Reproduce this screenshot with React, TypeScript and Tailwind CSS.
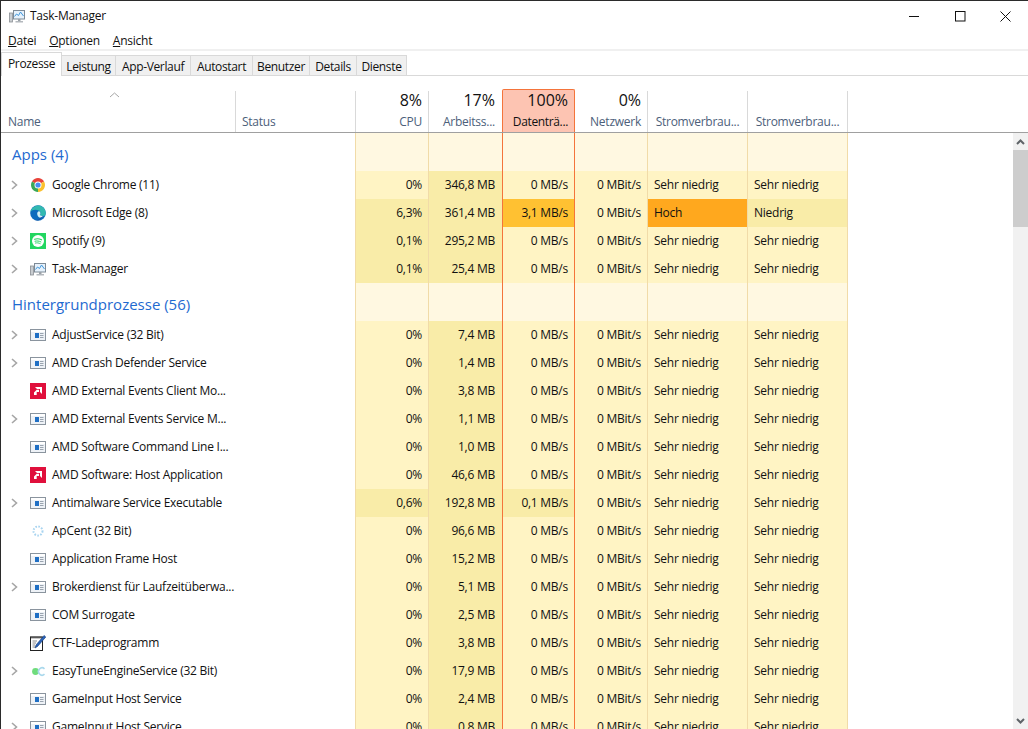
import React from "react";

const TINT = "bg-[#f9eca8]";
const BASE = "bg-[#fff4c4]";

function TaskIcon() {
  return (
    <svg width="16" height="16" viewBox="0 0 16 16" className="shrink-0">
      <rect x="0.5" y="5" width="3" height="9" fill="#c9cdd1" stroke="#8a8f94" strokeWidth="0.8" />
      <rect x="4.5" y="2.5" width="11" height="8.5" fill="#e6f1fb" stroke="#7d8a96" />
      <path d="M5.5 8.5 L7.5 6 L9.5 7.5 L11.5 4 L14.5 8" fill="none" stroke="#3f97dc" strokeWidth="1" />
      <rect x="9" y="11" width="2.5" height="2" fill="#9aa1a8" />
      <rect x="6.5" y="13" width="7.5" height="1.5" fill="#b3b8bd" />
    </svg>
  );
}

function ChromeIcon() {
  return (
    <svg width="16" height="16" viewBox="0 0 16 16" className="shrink-0">
      <path d="M8 8 L1.94 4.5 A7 7 0 0 1 14.06 4.5 Z" fill="#e8433a" />
      <path d="M8 8 L14.06 4.5 A7 7 0 0 1 8 15 Z" fill="#fbc02d" />
      <path d="M8 8 L8 15 A7 7 0 0 1 1.94 4.5 Z" fill="#3aa757" />
      <circle cx="8" cy="8" r="3.5" fill="#ffffff" />
      <circle cx="8" cy="8" r="2.6" fill="#4a8cf0" />
    </svg>
  );
}

function EdgeIcon() {
  return (
    <svg width="16" height="16" viewBox="0 0 16 16" className="shrink-0">
      <circle cx="8" cy="8" r="7.8" fill="#0f6cbd" />
      <path d="M0.4 7 C1.6 1.8 7 -0.6 11 1 C14 2.2 15.8 5 15.8 8.4 C15.8 10 14.5 11 12.8 11 C11 11 9.8 10.4 9.8 9.6 C11 8.6 10.8 6.8 9.2 5.8 C6.2 4 2 4.4 0.4 7 Z" fill="#33b9b0" />
      <path d="M7.2 8.2 C7.6 6.8 8.6 6.2 9.6 6.4 C10.6 7.2 10.8 8.8 9.8 9.6 C9.9 10.6 11 11.1 12.8 11 C12.2 12 11.2 12.6 10.2 12.8 C8.4 12.4 7 10.4 7.2 8.2 Z" fill="#d4f1f4" />
      <path d="M13 10.9 C11.8 13.8 8.8 15.9 5.4 15.4 C8 15.2 9.6 14 10.2 12.8 C11.2 12.4 12.2 11.8 13 10.9 Z" fill="#1b4e9e" />
    </svg>
  );
}

function SpotifyIcon() {
  return (
    <svg width="16" height="16" viewBox="0 0 16 16" className="shrink-0">
      <rect width="16" height="16" fill="#22d660" />
      <circle cx="8" cy="8" r="6" fill="#ffffff" />
      <path d="M4.6 6.2 C6.8 5.5 9.4 5.7 11.5 6.8" fill="none" stroke="#22d660" strokeWidth="1.2" strokeLinecap="round" />
      <path d="M5 8.2 C6.9 7.7 9 7.9 10.9 8.9" fill="none" stroke="#22d660" strokeWidth="1" strokeLinecap="round" />
      <path d="M5.4 10 C7 9.6 8.7 9.8 10.2 10.6" fill="none" stroke="#22d660" strokeWidth="0.9" strokeLinecap="round" />
    </svg>
  );
}

function ServiceIcon() {
  return (
    <svg width="16" height="16" viewBox="0 0 16 16" className="shrink-0">
      <rect x="0.5" y="2.5" width="15" height="11" fill="#eef2f7" stroke="#8a949e" />
      <rect x="1" y="3" width="14" height="2" fill="#ffffff" />
      <rect x="5" y="6" width="4" height="5" fill="#1f6fc4" />
      <path d="M10 6.5 H13.5 M10 8.5 H13.5 M10 10.5 H13.5" stroke="#9aa4af" strokeWidth="1" />
    </svg>
  );
}

function AmdIcon() {
  return (
    <svg width="16" height="16" viewBox="0 0 16 16" className="shrink-0">
      <rect width="16" height="16" fill="#e0103c" />
      <path d="M5 4 H12 V11 L10 9 V6 H7 Z" fill="#ffffff" />
      <path d="M4 9.5 L6.7 6.8 H9 V9 H6.7 V12 H4 Z" fill="#ffffff" />
    </svg>
  );
}

function ApCentIcon() {
  return (
    <svg width="16" height="16" viewBox="0 0 16 16" className="shrink-0">
      <circle cx="8" cy="8" r="4.5" fill="none" stroke="#a8d4f0" strokeWidth="2" strokeDasharray="1.6 1.4" />
    </svg>
  );
}

function CtfIcon() {
  return (
    <svg width="16" height="16" viewBox="0 0 16 16" className="shrink-0">
      <rect x="0.5" y="2" width="12" height="13.5" fill="#ffffff" stroke="#222222" />
      <path d="M1 1.5 V3.5 M3 1.5 V3.5 M5 1.5 V3.5 M7 1.5 V3.5 M9 1.5 V3.5 M11 1.5 V3.5" stroke="#222222" />
      <path d="M2.5 6 H7 M2.5 8 H6 M2.5 10 H5 M2.5 12 H5" stroke="#8a8a8a" />
      <path d="M14 0.5 L15.8 2 L7.5 11.5 L5 13 L6 10 Z" fill="#2a62b8" stroke="#123a78" strokeWidth="0.6" />
    </svg>
  );
}

function EasyTuneIcon() {
  return (
    <svg width="16" height="16" viewBox="0 0 16 16" className="shrink-0">
      <circle cx="5.5" cy="8.5" r="3.4" fill="#6fdc7c" />
      <path d="M14.5 5.8 A3.6 3.6 0 1 0 14.5 11.2" fill="none" stroke="#a9d8ec" strokeWidth="1.6" />
    </svg>
  );
}

function Chevron() {
  return (
    <svg width="7" height="10" viewBox="0 0 7 10" className="shrink-0">
      <path d="M1 1 L5.5 5 L1 9" fill="none" stroke="#a6a6a6" strokeWidth="1.6" />
    </svg>
  );
}

type Row = {
  name: string;
  icon: React.ReactNode;
  arrow?: boolean;
  cpu: string;
  mem: string;
  disk?: string;
  cpuTint?: boolean;
  diskTint?: boolean;
  diskHot?: boolean;
  power?: string;
  trend?: string;
};

const apps: Row[] = [
  { name: "Google Chrome (11)", icon: <ChromeIcon />, arrow: true, cpu: "0%", mem: "346,8 MB" },
  { name: "Microsoft Edge (8)", icon: <EdgeIcon />, arrow: true, cpu: "6,3%", cpuTint: true, mem: "361,4 MB", disk: "3,1 MB/s", diskHot: true, power: "Hoch", trend: "Niedrig" },
  { name: "Spotify (9)", icon: <SpotifyIcon />, arrow: true, cpu: "0,1%", cpuTint: true, mem: "295,2 MB" },
  { name: "Task-Manager", icon: <TaskIcon />, arrow: true, cpu: "0,1%", cpuTint: true, mem: "25,4 MB" },
];

const background: Row[] = [
  { name: "AdjustService (32 Bit)", icon: <ServiceIcon />, arrow: true, cpu: "0%", mem: "7,4 MB" },
  { name: "AMD Crash Defender Service", icon: <ServiceIcon />, arrow: true, cpu: "0%", mem: "1,4 MB" },
  { name: "AMD External Events Client Mo...", icon: <AmdIcon />, cpu: "0%", mem: "3,8 MB" },
  { name: "AMD External Events Service M...", icon: <ServiceIcon />, arrow: true, cpu: "0%", mem: "1,1 MB" },
  { name: "AMD Software Command Line I...", icon: <ServiceIcon />, cpu: "0%", mem: "1,0 MB" },
  { name: "AMD Software: Host Application", icon: <AmdIcon />, cpu: "0%", mem: "46,6 MB" },
  { name: "Antimalware Service Executable", icon: <ServiceIcon />, arrow: true, cpu: "0,6%", cpuTint: true, mem: "192,8 MB", disk: "0,1 MB/s", diskTint: true },
  { name: "ApCent (32 Bit)", icon: <ApCentIcon />, cpu: "0%", mem: "96,6 MB" },
  { name: "Application Frame Host", icon: <ServiceIcon />, cpu: "0%", mem: "15,2 MB" },
  { name: "Brokerdienst für Laufzeitüberwa...", icon: <ServiceIcon />, arrow: true, cpu: "0%", mem: "5,1 MB" },
  { name: "COM Surrogate", icon: <ServiceIcon />, cpu: "0%", mem: "2,5 MB" },
  { name: "CTF-Ladeprogramm", icon: <CtfIcon />, cpu: "0%", mem: "3,8 MB" },
  { name: "EasyTuneEngineService (32 Bit)", icon: <EasyTuneIcon />, arrow: true, cpu: "0%", mem: "17,9 MB" },
  { name: "GameInput Host Service", icon: <ServiceIcon />, cpu: "0%", mem: "2,4 MB" },
  { name: "GameInput Host Service", icon: <ServiceIcon />, arrow: true, cpu: "0%", mem: "0,8 MB" },
];

function ProcessRow({ row }: { row: Row }) {
  return (
    <div className="flex h-[28px] shrink-0 text-[12px] leading-[28px] text-[#111]">
      <div className="flex w-[235px] items-center">
        <div className="flex w-[29px] justify-end pr-[12px]">{row.arrow && <Chevron />}</div>
        {row.icon}
        <span className="ml-[6px] whitespace-nowrap">{row.name}</span>
      </div>
      <div className="w-[120px] border-r border-[#f1dba8]" />
      <div className={`w-[73px] border-r border-[#f1dba8] pr-[6px] text-right ${row.cpuTint ? TINT : BASE}`}>{row.cpu}</div>
      <div className={`w-[73px] pr-[7px] text-right ${TINT}`}>{row.mem}</div>
      <div className="w-[73px] border-x border-[#f4743b]">
        <div className={`h-full pr-[6px] text-right ${row.diskHot ? "bg-[#ffc132]" : row.diskTint ? TINT : BASE}`}>{row.disk ?? "0 MB/s"}</div>
      </div>
      <div className={`w-[73px] border-r border-[#f1dba8] pr-[6px] text-right ${BASE}`}>0 MBit/s</div>
      <div className={`w-[100px] border-r border-[#f1dba8] pl-[6px] ${row.power ? "bg-[#ffa81e]" : BASE}`}>{row.power ?? "Sehr niedrig"}</div>
      <div className={`w-[100px] border-r border-[#f1dba8] pl-[6px] ${row.trend ? TINT : BASE}`}>{row.trend ?? "Sehr niedrig"}</div>
    </div>
  );
}

function GroupRow({ title }: { title: string }) {
  const band = "h-full bg-[#fff8e1] border-r border-[#f1dba8]";
  return (
    <div className="flex h-[38px] shrink-0">
      <div className="flex w-[235px] items-end pb-[6px] pl-[11px] text-[15px] leading-[22px] tracking-normal text-[#1f6ad0]">{title}</div>
      <div className="h-full w-[120px] border-r border-[#f1dba8]" />
      <div className={`w-[73px] ${band}`} />
      <div className="h-full w-[73px] bg-[#fff8e1]" />
      <div className="h-full w-[73px] border-x border-[#f4743b] bg-[#fff8e1]" />
      <div className={`w-[73px] ${band}`} />
      <div className={`w-[100px] ${band}`} />
      <div className={`w-[100px] ${band}`} />
    </div>
  );
}

function HeadCell({ width, value, label, hot, center, noBorder }: { width: string; value?: string; label: string; hot?: boolean; center?: boolean; noBorder?: boolean }) {
  if (hot) {
    return (
      <div className={`${width} mt-[13px] flex h-[43px] flex-col rounded-t-[2px] border-x border-t border-[#f4743b] bg-[#fdc4b2] pr-[6px] text-right`}>
        <div className="mt-[1px] h-[20px] text-[16px] leading-[18px] tracking-normal text-[#111]">{value}</div>
        <div className="mt-[2px] whitespace-nowrap text-[12px] leading-[18px] tracking-[-0.35px] text-[#111]">{label}</div>
      </div>
    );
  }
  return (
    <div className={`${width} mt-[15px] flex h-[41px] flex-col ${noBorder ? "pr-[7px]" : center ? "border-r border-[#d9d9d9]" : "border-r border-[#d9d9d9] pr-[6px]"} ${center ? "text-center" : "text-right"}`}>
      <div className="h-[20px] text-[16px] leading-[18px] tracking-normal text-[#111]">{value}</div>
      <div className="mt-[2px] whitespace-nowrap text-[12px] leading-[18px] text-[#4c607a]">{label}</div>
    </div>
  );
}

export default function App() {
  const tabs = [
    { label: "Leistung", w: "w-[54px]" },
    { label: "App-Verlauf", w: "w-[75px]" },
    { label: "Autostart", w: "w-[62px]" },
    { label: "Benutzer", w: "w-[57px]" },
    { label: "Details", w: "w-[47px]" },
    { label: "Dienste", w: "w-[50px]" },
  ];
  return (
    <div className="flex h-[729px] w-[1028px] flex-col overflow-hidden border-l border-t border-[#2b2b2b] bg-white font-['Open_Sans',sans-serif] text-[12px] tracking-[-0.25px] text-[#111]">
      {/* title bar */}
      <div className="flex h-[30px] shrink-0 items-center">
        <div className="ml-[8px] mr-[5px]"><TaskIcon /></div>
        <span>Task-Manager</span>
        <div className="ml-auto flex">
          <div className="flex w-[46px] justify-center">
            <svg width="11" height="11" viewBox="0 0 11 11"><path d="M0 5.5 H10" stroke="#111" /></svg>
          </div>
          <div className="flex w-[46px] justify-center">
            <svg width="11" height="11" viewBox="0 0 11 11"><rect x="0.5" y="0.5" width="9.5" height="9.5" fill="none" stroke="#111" /></svg>
          </div>
          <div className="flex w-[45px] justify-center">
            <svg width="11" height="11" viewBox="0 0 11 11"><path d="M0.5 0.5 L10.5 10.5 M10.5 0.5 L0.5 10.5" stroke="#111" /></svg>
          </div>
        </div>
      </div>

      {/* menu */}
      <div className="flex h-[18px] shrink-0 items-center gap-[13px] pl-[7px] pt-[2px] leading-[16px]">
        <span><u>D</u>atei</span>
        <span><u>O</u>ptionen</span>
        <span><u>A</u>nsicht</span>
      </div>
      <div className="h-[2px] shrink-0 bg-[#f0f0f0]" />

      {/* tabs */}
      <div className="flex h-[25px] shrink-0 items-end border-b border-[#d9d9d9] tracking-[-0.35px]">
        <div className="-mb-px z-10 h-[24px] w-[61px] border-x border-t border-[#d9d9d9] bg-white pt-[2px] text-center leading-[18px]">Prozesse</div>
        {tabs.map((t) => (
          <div key={t.label} className={`h-[20px] ${t.w} border-r border-t border-[#d9d9d9] bg-[#f0f0f0] text-center leading-[21px]`}>{t.label}</div>
        ))}
      </div>

      {/* column headers */}
      <div className="flex h-[57px] shrink-0 border-b border-[#a0a0a0]">
        <div className="relative mt-[15px] flex h-[41px] w-[235px] flex-col justify-end border-r border-[#d9d9d9] pb-[1px] pl-[7px] leading-[18px] text-[#4c607a]">
          <svg width="11" height="6" viewBox="0 0 11 6" className="absolute left-[108px] top-[1px]"><path d="M1 5 L5.5 1 L10 5" fill="none" stroke="#a6a6a6" /></svg>
          Name
        </div>
        <div className="mt-[15px] flex h-[41px] w-[120px] flex-col justify-end border-r border-[#d9d9d9] pb-[1px] pl-[6px] leading-[18px] text-[#4c607a]">Status</div>
        <HeadCell width="w-[73px]" value="8%" label="CPU" />
        <HeadCell width="w-[73px]" value="17%" label="Arbeitss..." noBorder />
        <HeadCell width="w-[73px]" value="100%" label="Datenträ..." hot />
        <HeadCell width="w-[73px]" value="0%" label="Netzwerk" />
        <HeadCell width="w-[100px]" label="Stromverbrau..." center />
        <HeadCell width="w-[100px]" label="Stromverbrau..." center />
      </div>

      {/* process table + scrollbar */}
      <div className="flex min-h-0 flex-1">
        <div className="flex min-w-0 flex-1 flex-col overflow-hidden">
          <GroupRow title="Apps (4)" />
          {apps.map((r) => <ProcessRow key={r.name} row={r} />)}
          <GroupRow title="Hintergrundprozesse (56)" />
          {background.map((r, i) => <ProcessRow key={i} row={r} />)}
        </div>
        <div className="flex w-[15px] shrink-0 flex-col bg-[#f1f1f1]">
          <div className="flex h-[17px] items-center justify-center">
            <svg width="9" height="6" viewBox="0 0 9 6"><path d="M1 5 L4.5 1.5 L8 5" fill="none" stroke="#5f6468" strokeWidth="2" /></svg>
          </div>
          <div className="h-[77px] bg-[#cdcdcd]" />
          <div className="mt-auto flex h-[17px] items-center justify-center">
            <svg width="9" height="6" viewBox="0 0 9 6"><path d="M1 1 L4.5 4.5 L8 1" fill="none" stroke="#5f6468" strokeWidth="2" /></svg>
          </div>
        </div>
      </div>
    </div>
  );
}
